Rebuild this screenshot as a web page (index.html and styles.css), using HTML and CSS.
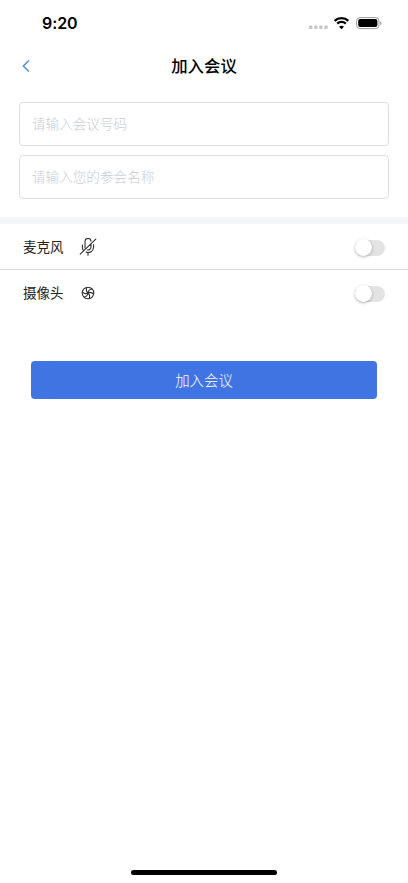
FILE: index.html
```html
<!DOCTYPE html>
<html lang="zh-CN">
<head>
<meta charset="utf-8">
<meta name="viewport" content="width=device-width, initial-scale=1">
<title>加入会议</title>
<link rel="stylesheet" href="styles.css">
</head>
<body>
<div class="screen">
  <header class="status">
    <span class="time">9:20</span>
    <svg class="status-icons" width="76" height="18" viewBox="0 0 76 18">
      <g fill="#c6c6c6"><rect x="1" y="11.6" width="3.4" height="3.4" rx=".8"/><rect x="6.1" y="11.6" width="3.4" height="3.4" rx=".8"/><rect x="11.2" y="11.6" width="3.4" height="3.4" rx=".8"/><rect x="16.3" y="11.6" width="3.4" height="3.4" rx=".8"/></g>
      <g fill="none" stroke="#000" stroke-width="2.3"><path d="M26.6 6.8a10 10 0 0 1 13.8 0"/><path d="M29.2 9.7a6.2 6.2 0 0 1 8.6 0"/></g>
      <path d="M33.5 15.2l-2.4-2.5a3.6 3.6 0 0 1 4.8 0z"/>
      <rect x="48.6" y="3.6" width="22.4" height="11" rx="3.4" fill="none" stroke="#999"/>
      <rect x="50.2" y="5.1" width="19.2" height="8" rx="2"/>
      <path d="M72.2 7.3c1.8.5 1.8 3.1 0 3.6z" fill="#999"/>
    </svg>
  </header>
  <nav class="nav">
    <svg class="back" width="8" height="12" viewBox="0 0 8 12" fill="none" stroke="#4a8ddb" stroke-width="1.4"><path d="M6.9.6L1.3 6l5.6 5.4"/></svg>
    <h1 class="title">加入会议</h1>
  </nav>
  <form class="form">
    <input class="field" type="text" placeholder="请输入会议号码">
    <input class="field" type="text" placeholder="请输入您的参会名称">
  </form>
  <section class="settings">
    <div class="row">
      <span class="label">麦克风</span>
      <svg class="icon" width="18" height="18" viewBox="0 0 18 18" fill="none" stroke="#303030" stroke-width="1.1" stroke-linecap="round"><path d="M6 10V3.6a3 3 0 0 1 6-.4M12 6.6v2.4a3 3 0 0 1-3.4 2.9M3.4 7v2.3c0 1 .2 1.8.6 2.6M14.6 6.6v2.7a5.5 5.5 0 0 1-7.6 4.8M9 14.8v2.5M1.2 16.2L16.8 1.2"/></svg>
      <span class="switch"></span>
    </div>
    <div class="row">
      <span class="label">摄像头</span>
      <svg class="icon" width="18" height="18" viewBox="0 0 18 18" fill="none" stroke="#303030" stroke-width="1.1"><circle cx="9" cy="9" r="5.8"/><path d="M9 9Q6.4 6.8 7.8 3.4M9 9Q9.4 5.4 13.2 5M9 9Q12 7.4 14.6 10.2M9 9Q11.6 11.2 10.2 14.6M9 9Q8.6 12.6 4.8 13M9 9Q6 10.6 3.4 7.8"/></svg>
      <span class="switch"></span>
    </div>
  </section>
  <button class="join" type="button">加入会议</button>
  <div class="home"></div>
</div>
</body>
</html>
```
FILE: styles.css
```css
* {
  box-sizing: border-box;
}

body {
  margin: 0;
  background: #fff;
  color: #222;
  font-family: Inter, "Noto Sans CJK SC", sans-serif;
}

.screen {
  display: flex;
  flex-direction: column;
  height: 883px;
  overflow: hidden;
}

.status {
  display: flex;
  align-items: center;
  justify-content: space-between;
  height: 46px;
  padding: 0 24px 0 42px;
}

.time {
  color: #000;
  font-size: 16px;
  font-weight: 600;
  line-height: 20px;
  letter-spacing: -.1px;
}

.nav {
  display: grid;
  grid-template-columns: 30px 1fr 30px;
  align-items: center;
  height: 40px;
  padding: 0 22px;
}

.title {
  margin: 0;
  color: #000;
  font-size: 16.4px;
  font-weight: 500;
  line-height: 24px;
  text-align: center;
}

.form {
  display: flex;
  flex-direction: column;
  gap: 9px;
  padding: 16px 19px 18px;
}

.field {
  width: 100%;
  height: 44px;
  padding: 0 12px 2px;
  border: 1px solid #dcdde6;
  border-radius: 4px;
  background: #fff;
  color: #222;
  font: 300 13.6px/20px "Noto Sans CJK SC", sans-serif;
  outline: 0;
}

.field::placeholder {
  color: #c9cada;
  opacity: 1;
}

.settings {
  border-top: 7px solid #f4f5f9;
}

.row {
  display: flex;
  align-items: center;
  height: 45px;
  padding: 0 23px;
}

.row + .row {
  border-top: 1px solid #d9dae6;
  height: 48px;
}

.row + .row .label,
.row + .row .icon,
.row + .row .switch {
  transform: translateY(-1px);
}

.label {
  width: 56px;
  font-size: 13.5px;
  line-height: 20px;
}

.switch {
  display: flex;
  align-items: center;
  width: 30px;
  height: 16px;
  margin: 2px 0 0 auto;
  border-radius: 8px;
  background: #e3e3e3;
}

.switch::before {
  content: "";
  width: 17px;
  height: 17px;
  margin-left: -.5px;
  flex: none;
  border-radius: 50%;
  background: #fff;
  box-shadow: 0 1px 3px rgba(0, 0, 0, .3);
}

.join {
  height: 38px;
  margin: 44px 31px 0;
  padding: 0 0 1px;
  border: 0;
  border-radius: 4px;
  background: #4174e3;
  color: #fff;
  font: 300 14.4px/20px "Noto Sans CJK SC", sans-serif;
}

.home {
  width: 146px;
  height: 5px;
  margin: auto auto 8px;
  border-radius: 3px;
  background: #000;
}
```
